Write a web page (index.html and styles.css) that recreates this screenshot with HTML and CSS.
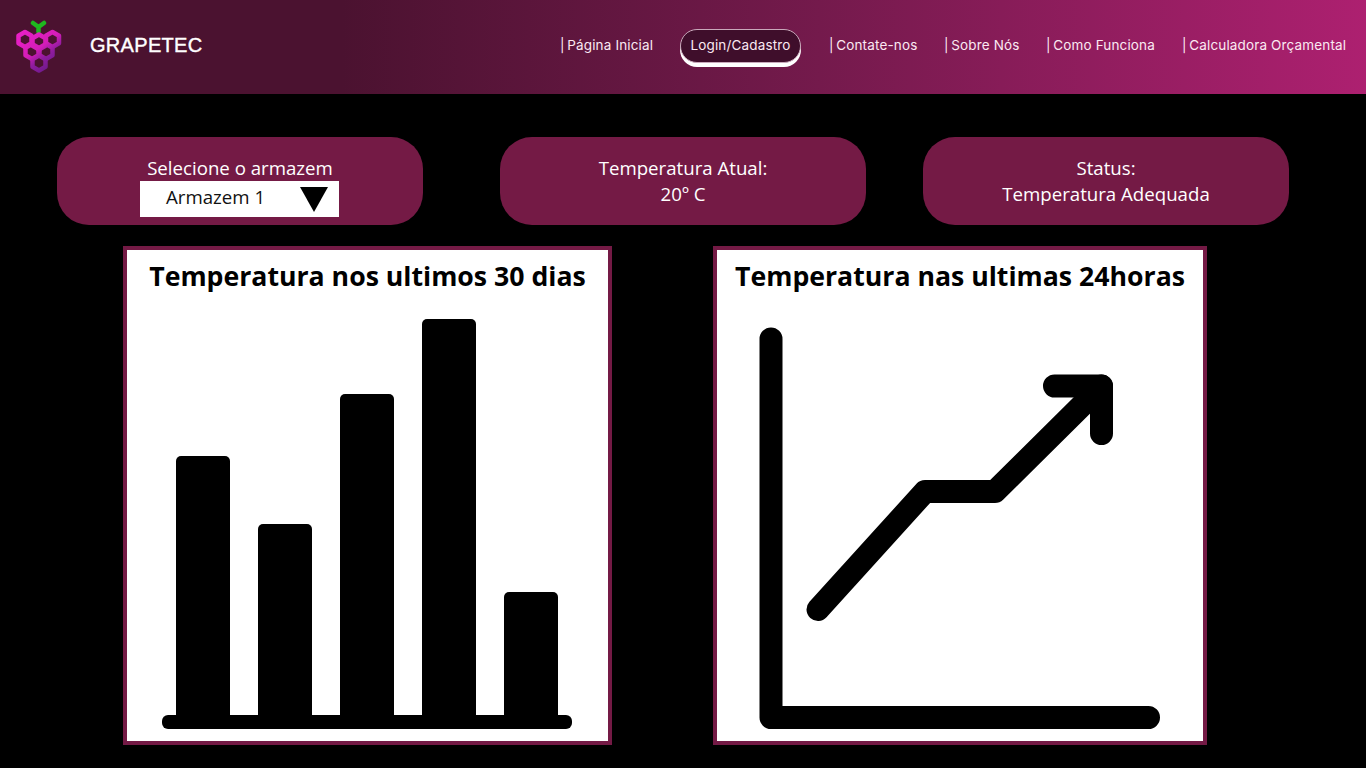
FILE: index.html
```html
<!DOCTYPE html>
<html lang="pt-BR">
<head>
    <meta charset="UTF-8">
    <meta name="viewport" content="width=device-width, initial-scale=1.0">
    <title>Grapetec - Temperatura</title>
    <link rel="stylesheet" href="styles.css">
</head>
<body>

<header class="topbar">
    <div class="brand">
        <svg class="brand-logo" viewBox="0 0 48 54" width="48" height="54" aria-hidden="true">
            <defs>
                <linearGradient id="grape" gradientUnits="userSpaceOnUse" x1="6" y1="12" x2="34" y2="50">
                    <stop offset="0" stop-color="#ea1fc6"/>
                    <stop offset="0.5" stop-color="#d41db8"/>
                    <stop offset="0.72" stop-color="#8f1c9e"/>
                    <stop offset="1" stop-color="#6c1a8a"/>
                </linearGradient>
            </defs>
            <path class="logo-stem" d="M18 3 L23.500 7 L29 3 M23.500 7 V12"/>
            <g class="logo-hex" stroke="url(#grape)">
                <path d="M10 12 L16.500 15.800 V23.200 L10 27 L3.500 23.200 V15.800 Z"/>
                <path d="M24 14.500 L30.500 18.300 V25.700 L24 29.500 L17.500 25.700 V18.300 Z"/>
                <path d="M37.500 12 L44 15.800 V23.200 L37.500 27 L31 23.200 V15.800 Z"/>
                <path d="M17 24 L23.500 27.800 V35.200 L17 39 L10.500 35.200 V27.800 Z"/>
                <path d="M31 24 L37.500 27.800 V35.200 L31 39 L24.500 35.200 V27.800 Z"/>
                <path d="M24 35.500 L30.500 39.300 V46.700 L24 50.500 L17.500 46.700 V39.300 Z"/>
            </g>
        </svg>
        <span class="brand-name">GRAPETEC</span>
    </div>
    <nav class="menu">
        <a class="menu-item" href="#">|&#8201;Página Inicial</a>
        <a class="menu-item menu-login" href="#">Login/Cadastro</a>
        <a class="menu-item" href="#">|&#8201;Contate-nos</a>
        <a class="menu-item" href="#">|&#8201;Sobre Nós</a>
        <a class="menu-item" href="#">|&#8201;Como Funciona</a>
        <a class="menu-item" href="#">|&#8201;Calculadora Orçamental</a>
    </nav>
</header>

<main class="content">
    <section class="cards">
        <div class="card">
            <p>Selecione o armazem</p>
            <div class="picker">
                <span>Armazem 1</span>
                <i class="picker-arrow"></i>
            </div>
        </div>
        <div class="card card-temp">
            <p>Temperatura Atual:</p>
            <p>20º C</p>
        </div>
        <div class="card">
            <p>Status:</p>
            <p>Temperatura Adequada</p>
        </div>
    </section>

    <section class="charts">
        <div class="chart chart-month">
            <h2>Temperatura nos ultimos 30 dias</h2>
            <div class="bars">
                <div class="bar" style="height: 259px"></div>
                <div class="bar" style="height: 191px"></div>
                <div class="bar" style="height: 321px"></div>
                <div class="bar" style="height: 396px"></div>
                <div class="bar" style="height: 123px"></div>
            </div>
            <div class="baseline"></div>
        </div>
        <div class="chart chart-day">
            <h2>Temperatura nas ultimas 24horas</h2>
            <svg class="trend" viewBox="750 318 420 411" width="420" height="411" aria-hidden="true">
                <path d="M771 339 V717.500 H1148.500"/>
                <path d="M818 609.500 L925 491.500 H995 L1101.500 386"/>
                <path d="M1054.500 386 H1101.500 V433.500"/>
            </svg>
        </div>
    </section>
</main>

</body>
</html>
```

FILE: styles.css
```css
* {
    box-sizing: border-box;
}

body {
    margin: 0;
    height: 768px;
    overflow: hidden;
    background: #000;
    color: #fff;
    font-family: "Open Sans", sans-serif;
}

p, h2 {
    margin: 0;
}

/* top bar */
.topbar {
    height: 94px;
    display: flex;
    align-items: center;
    justify-content: space-between;
    padding: 0 18px 0 15px;
    background: linear-gradient(90deg, #4b1230 0%, #4b1230 25%, #741a4c 60%, #ad2070 100%);
}

.brand {
    display: flex;
    align-items: center;
}

.brand-logo {
    display: block;
}

.logo-stem {
    fill: none;
    stroke: #1fb81f;
    stroke-width: 4.5;
    stroke-linecap: round;
    stroke-linejoin: round;
}

.logo-hex path {
    fill: none;
    stroke-width: 4.5;
    stroke-linejoin: round;
}

.brand-name {
    margin: -4px 0 0 27px;
    font-family: "Liberation Sans", sans-serif;
    font-size: 20px;
    letter-spacing: 0.3px;
    -webkit-text-stroke: 0.4px #fff;
}

.menu {
    display: grid;
    grid-template-columns: 92px 121px 87px 74px 108px 166px;
    align-items: center;
    column-gap: 28px;
    padding-bottom: 4px;
}

.menu-item {
    color: #fbe9f2;
    font-family: "Inter", sans-serif;
    font-size: 13.5px;
    letter-spacing: 0.15px;
    text-decoration: none;
    white-space: nowrap;
}

.menu-login {
    height: 34px;
    margin-top: 2px;
    line-height: 30px;
    text-align: center;
    background: #3f0e2b;
    border: 1px solid #c9a9bb;
    border-radius: 17px;
    box-shadow: 0 4px 0 #fff;
}

/* main area */
.content {
    padding-top: 43px;
}

.cards {
    display: flex;
    gap: 57px;
    padding-left: 57px;
}

.card {
    width: 366px;
    height: 88px;
    padding-top: 18px;
    background: #741a45;
    border-radius: 32px;
    font-size: 18.67px;
    line-height: 26px;
    text-align: center;
}

.card-temp {
    margin-left: 20px;
}

.picker {
    width: 199px;
    height: 36px;
    margin-left: 83px;
    padding: 0 11px 4px 26px;
    display: flex;
    align-items: center;
    justify-content: space-between;
    background: #fff;
    color: #111;
}

.picker-arrow {
    width: 0;
    height: 0;
    margin-top: 4px;
    border-left: 14px solid transparent;
    border-right: 14px solid transparent;
    border-top: 25px solid #000;
}

.charts {
    display: flex;
    gap: 101px;
    margin-top: 21px;
    padding-left: 123px;
}

.chart {
    height: 499px;
    display: flex;
    flex-direction: column;
    padding-bottom: 12px;
    background: #fff;
    border: 4px solid #741a45;
    color: #000;
}

.chart h2 {
    margin-top: 7px;
    font-size: 26.67px;
    line-height: 38px;
    font-weight: 700;
    text-align: center;
    white-space: nowrap;
}

.chart-month {
    width: 489px;
}

.chart-day {
    width: 494px;
}

.bars {
    display: flex;
    align-items: flex-end;
    gap: 28px;
    margin-top: auto;
    padding-left: 49px;
}

.bar {
    width: 54px;
    background: #000;
    border-radius: 5px 5px 0 0;
}

.baseline {
    width: 410px;
    height: 14px;
    margin-left: 35px;
    background: #000;
    border-radius: 6px;
}

.trend {
    display: block;
    margin: auto 0 0 33px;
}

.trend path {
    fill: none;
    stroke: #000;
    stroke-width: 23;
    stroke-linecap: round;
    stroke-linejoin: round;
}
```
